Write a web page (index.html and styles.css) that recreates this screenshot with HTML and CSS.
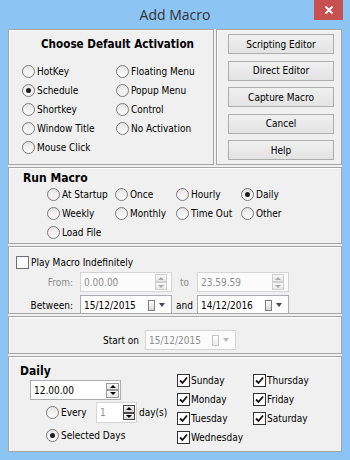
FILE: index.html
```html
<!DOCTYPE html>
<html>
	<head>
		<meta charset="utf-8">
		<title>Add Macro</title>
		<link rel="stylesheet" href="styles.css">
	</head>
	<body>
		<div class="window">
			<div class="titlebar">
				<span class="title">Add Macro</span>
				<span class="close"><svg width="10" height="10" viewBox="0 0 10 10"><path d="M1.5 1.5L8.5 8.5M8.5 1.5L1.5 8.5" stroke="#fff" stroke-width="1.8"/></svg></span>
			</div>
			<div class="client">
				<div class="toprow">
					<div class="panel activation">
						<div class="heading">Choose Default Activation</div>
						<div class="act-opts">
							<label class="opt"><span class="radio"></span>HotKey</label>
							<label class="opt"><span class="radio"></span>Floating Menu</label>
							<label class="opt"><span class="radio on"></span>Schedule</label>
							<label class="opt"><span class="radio"></span>Popup Menu</label>
							<label class="opt"><span class="radio"></span>Shortkey</label>
							<label class="opt"><span class="radio"></span>Control</label>
							<label class="opt"><span class="radio"></span>Window Title</label>
							<label class="opt"><span class="radio"></span>No Activation</label>
							<label class="opt"><span class="radio"></span>Mouse Click</label>
						</div>
					</div>
					<div class="panel buttons">
						<div class="btn">Scripting Editor</div>
						<div class="btn">Direct Editor</div>
						<div class="btn">Capture Macro</div>
						<div class="btn">Cancel</div>
						<div class="btn">Help</div>
					</div>
				</div>

				<div class="panel run">
					<div class="heading">Run Macro</div>
					<div class="run-opts">
						<label class="opt"><span class="radio"></span>At Startup</label>
						<label class="opt"><span class="radio"></span>Once</label>
						<label class="opt"><span class="radio"></span>Hourly</label>
						<label class="opt"><span class="radio on"></span>Daily</label>
						<label class="opt"><span class="radio"></span>Weekly</label>
						<label class="opt"><span class="radio"></span>Monthly</label>
						<label class="opt"><span class="radio"></span>Time Out</label>
						<label class="opt"><span class="radio"></span>Other</label>
						<label class="opt"><span class="radio"></span>Load File</label>
					</div>
				</div>

				<div class="panel play">
					<label class="opt"><span class="check"></span>Play Macro Indefinitely</label>
					<div class="frow">
						<span class="flabel off">From:</span>
						<div class="field off">0.00.00<span class="spin"><span class="up"></span><span class="down"></span></span></div>
						<span class="joint off">to</span>
						<div class="field off">23.59.59<span class="spin"><span class="up"></span><span class="down"></span></span></div>
					</div>
					<div class="frow">
						<span class="flabel">Between:</span>
						<div class="field">15/12/2015<span class="pick"><span class="cal"></span><span class="drop"></span></span></div>
						<span class="joint">and</span>
						<div class="field">14/12/2016<span class="pick"><span class="cal"></span><span class="drop"></span></span></div>
					</div>
				</div>

				<div class="panel start">
					<span>Start on</span>
					<div class="field off">15/12/2015<span class="pick"><span class="cal"></span><span class="drop"></span></span></div>
				</div>

				<div class="panel daily">
					<div class="daily-left">
						<div class="heading">Daily</div>
						<div class="field time">12.00.00<span class="spin"><span class="up"></span><span class="down"></span></span></div>
						<div class="every">
							<label class="opt every-label"><span class="radio"></span>Every</label>
							<div class="field num">1<span class="spin dark"><span class="up"></span><span class="down"></span></span></div>
							<span>day(s)</span>
						</div>
						<label class="opt selected"><span class="radio on"></span>Selected Days</label>
					</div>
					<div class="days">
						<label class="opt"><span class="check on"><svg width="11" height="11" viewBox="0 0 11 11"><path d="M2 5.5L4.5 8L9 2.5" fill="none" stroke="#111" stroke-width="1.8"/></svg></span>Sunday</label>
						<label class="opt"><span class="check on"><svg width="11" height="11" viewBox="0 0 11 11"><path d="M2 5.5L4.5 8L9 2.5" fill="none" stroke="#111" stroke-width="1.8"/></svg></span>Thursday</label>
						<label class="opt"><span class="check on"><svg width="11" height="11" viewBox="0 0 11 11"><path d="M2 5.5L4.5 8L9 2.5" fill="none" stroke="#111" stroke-width="1.8"/></svg></span>Monday</label>
						<label class="opt"><span class="check on"><svg width="11" height="11" viewBox="0 0 11 11"><path d="M2 5.5L4.5 8L9 2.5" fill="none" stroke="#111" stroke-width="1.8"/></svg></span>Friday</label>
						<label class="opt"><span class="check on"><svg width="11" height="11" viewBox="0 0 11 11"><path d="M2 5.5L4.5 8L9 2.5" fill="none" stroke="#111" stroke-width="1.8"/></svg></span>Tuesday</label>
						<label class="opt"><span class="check on"><svg width="11" height="11" viewBox="0 0 11 11"><path d="M2 5.5L4.5 8L9 2.5" fill="none" stroke="#111" stroke-width="1.8"/></svg></span>Saturday</label>
						<label class="opt"><span class="check on"><svg width="11" height="11" viewBox="0 0 11 11"><path d="M2 5.5L4.5 8L9 2.5" fill="none" stroke="#111" stroke-width="1.8"/></svg></span>Wednesday</label>
					</div>
				</div>
			</div>
		</div>
	</body>
</html>
```

FILE: styles.css
```css
*{
	margin:0;
	padding:0;
	box-sizing:border-box;
}
body{
	font-family:"DejaVu Sans Condensed","Liberation Sans",sans-serif;
	font-size:10px;
	color:#000;
}
.window{
	width:350px;
	height:460px;
	background:#8cc4f4;
	display:flex;
	flex-direction:column;
}
.titlebar{
	height:29px;
	display:grid;
	grid-template-columns:1fr auto 1fr;
}
.title{
	grid-column:2;
	font-family:"Open Sans","Liberation Sans",sans-serif;
	font-size:14px;
	line-height:30px;
	color:#333;
}
.close{
	grid-column:3;
	justify-self:end;
	width:29px;
	height:20px;
	margin-right:7px;
	background:#c75050;
	display:flex;
	align-items:center;
	justify-content:center;
}
.client{
	flex:1;
	margin:0 8px 8px;
	background:#f0f0f0;
	display:flex;
	flex-direction:column;
	gap:2px;
}
.panel{
	border:1px solid #a5a5a5;
	box-shadow:inset 1px 1px 0 #fff;
	overflow:hidden;
}
.heading{
	font-weight:bold;
	font-size:11px;
	line-height:14px;
}

/* radio / checkbox */
.opt{
	display:flex;
	align-items:center;
	gap:2px;
	height:19px;
	white-space:nowrap;
}
.radio{
	flex:none;
	width:13px;
	height:13px;
	border:1px solid #7a7a7a;
	border-radius:50%;
	background:linear-gradient(#e6e6e6,#fdfdfd);
	display:flex;
	align-items:center;
	justify-content:center;
}
.radio.on::after{
	content:"";
	width:5px;
	height:5px;
	border-radius:50%;
	background:#1c1c1c;
}
.check{
	flex:none;
	width:13px;
	height:13px;
	border:1px solid #707070;
	background:#fff;
	display:flex;
	align-items:center;
	justify-content:center;
}
.check.on{
	border-color:#333;
}

/* top */
.toprow{
	height:136px;
	display:flex;
	gap:2px;
}
.activation{
	width:206px;
	padding:6px 0 0 13px;
}
.activation .heading{
	text-align:center;
	font-size:11.6px;
	line-height:16px;
}
.act-opts{
	margin-top:10px;
	display:grid;
	grid-template-columns:94px auto;
}
.buttons{
	flex:1;
	padding:4px 0 0 11px;
	display:flex;
	flex-direction:column;
	gap:6.5px;
}
.btn{
	width:106px;
	height:20px;
	border:1px solid #adadad;
	background:linear-gradient(#f0f0f0,#e3e3e3);
	display:flex;
	align-items:center;
	justify-content:center;
}

/* run macro */
.run{
	height:77px;
	padding:3px 0 0 14px;
}
.run .heading{
	font-size:12px;
}
.run-opts{
	margin:0 0 0 24px;
	display:grid;
	grid-template-columns:68px 61px 65px auto;
}

/* play */
.play{
	height:68px;
	padding:8px 0 0 7px;
}
.play .opt{
	height:15px;
}
.frow{
	display:flex;
	align-items:center;
	height:20px;
	margin-top:3px;
}
.play .opt + .frow{
	margin-top:2px;
}
.flabel{
	width:57px;
	margin-right:7px;
	text-align:right;
}
.joint{
	width:25px;
	text-align:center;
}
.off{
	color:#8d8d8d;
}
.field{
	width:92px;
	height:20px;
	border:1px solid #abadb3;
	background:#fff;
	padding-left:3px;
	display:flex;
	align-items:center;
	flex:none;
}
.field.off{
	border-color:#d5d5d5;
	background:#fbfbfb;
}
.spin{
	margin:0 4px 0 auto;
	display:flex;
	flex-direction:column;
}
.spin span{
	width:12px;
	height:8px;
	border:1px solid #cfcfcf;
	background:linear-gradient(#f7f7f7,#e8e8e8);
	display:flex;
	align-items:center;
	justify-content:center;
}
.spin .up::after,
.spin .down::after{
	content:"";
	border-left:3px solid transparent;
	border-right:3px solid transparent;
}
.spin .up::after{
	border-bottom:3px solid #555;
}
.spin .down::after{
	border-top:3px solid #555;
}
.off .spin .up::after{
	border-bottom-color:#aaa;
}
.off .spin .down::after{
	border-top-color:#aaa;
}
.spin.dark span{
	border-color:#4a4a4a;
	background:linear-gradient(#f2f2f2,#d6d6d6);
}
.spin.dark .up::after{
	border-bottom-color:#000;
}
.spin.dark .down::after{
	border-top-color:#000;
}
.pick{
	margin:0 6px 0 auto;
	display:flex;
	align-items:center;
	gap:4px;
}
.cal{
	width:7px;
	height:11px;
	border:1px solid #7d7d7d;
	background:linear-gradient(#fff,#d8d8d8);
}
.drop{
	border-left:3.5px solid transparent;
	border-right:3.5px solid transparent;
	border-top:4px solid #3b4663;
}
.off .cal{
	border-color:#c4c4c4;
	background:linear-gradient(#fff,#ececec);
}
.off .drop{
	border-top-color:#b8b8b8;
}

/* start on */
.start{
	height:38px;
	padding:10px 0 0 94px;
	display:flex;
	align-items:center;
	gap:6px;
}
.start .field{
	width:91px;
}

/* daily */
.daily{
	height:96px;
	display:flex;
}
.daily-left{
	width:168px;
	padding:7px 0 0 11px;
}
.daily .heading{
	font-size:12px;
}
.field.time{
	width:91px;
	margin:2px 0 0 10px;
}
.field.time .spin{
	margin-right:1px;
}
.field.time .spin span{
	width:13px;
	height:7.5px;
	border-color:#9a9a9a;
}
.field.time .spin .up::after{
	border-bottom-color:#000;
}
.field.time .spin .down::after{
	border-top-color:#000;
}
.every{
	display:flex;
	align-items:center;
	height:21px;
	margin:2px 0 0 26px;
}
.every-label{
	width:50px;
}
.field.num{
	width:41px;
	height:21px;
	color:#8d8d8d;
	border-color:#d5d5d5;
	margin-right:2px;
}
.field.num .spin{
	margin-right:1px;
}
.field.num .spin span{
	height:7.5px;
}
.selected{
	margin:3px 0 0 26px;
}
.days{
	margin-top:14px;
	display:grid;
	grid-template-columns:76px auto;
	align-content:start;
}
.days .opt{
	gap:1px;
}
```
